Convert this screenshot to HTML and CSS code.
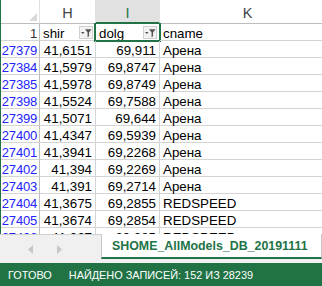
FILE: index.html
```html
<!DOCTYPE html>
<html lang="ru">
<head>
  <meta charset="UTF-8" />
  <title>SHOME_AllModels_DB_20191111</title>
  <link rel="stylesheet" href="styles.css">
</head>
<body>
  <div class="sheet">
    <div class="row head">
      <div class="c num corner"><span class="tri"></span></div>
      <div class="c h">H</div>
      <div class="c i sel">I</div>
      <div class="c k">K</div>
    </div>
    <div class="row">
      <div class="c num plain">1</div>
      <div class="c h txt">shir<span class="flt"><svg width="13" height="13" viewBox="0 0 13 13"><path d="M1 6h4l-2 2.2z" fill="#555"/><path d="M5.5 3h7l-2.7 3.4v4.2l-1.6 1v-5.2z" fill="#555"/></svg></span></div>
      <div class="c i txt active">dolg<span class="flt"><svg width="13" height="13" viewBox="0 0 13 13"><path d="M1 6h4l-2 2.2z" fill="#555"/><path d="M5.5 3h7l-2.7 3.4v4.2l-1.6 1v-5.2z" fill="#555"/></svg></span></div>
      <div class="c k txt">cname<span class="flt edge"></span></div>
    </div>
    <div class="row"><div class="c num">27379</div><div class="c h">41,6151</div><div class="c i">69,911</div><div class="c k txt">Арена</div></div>
    <div class="row"><div class="c num">27384</div><div class="c h">41,5979</div><div class="c i">69,8747</div><div class="c k txt">Арена</div></div>
    <div class="row"><div class="c num">27385</div><div class="c h">41,5978</div><div class="c i">69,8749</div><div class="c k txt">Арена</div></div>
    <div class="row"><div class="c num">27398</div><div class="c h">41,5524</div><div class="c i">69,7588</div><div class="c k txt">Арена</div></div>
    <div class="row"><div class="c num">27399</div><div class="c h">41,5071</div><div class="c i">69,644</div><div class="c k txt">Арена</div></div>
    <div class="row"><div class="c num">27400</div><div class="c h">41,4347</div><div class="c i">69,5939</div><div class="c k txt">Арена</div></div>
    <div class="row"><div class="c num">27401</div><div class="c h">41,3941</div><div class="c i">69,2268</div><div class="c k txt">Арена</div></div>
    <div class="row"><div class="c num">27402</div><div class="c h">41,394</div><div class="c i">69,2269</div><div class="c k txt">Арена</div></div>
    <div class="row"><div class="c num">27403</div><div class="c h">41,391</div><div class="c i">69,2714</div><div class="c k txt">Арена</div></div>
    <div class="row"><div class="c num">27404</div><div class="c h">41,3675</div><div class="c i">69,2855</div><div class="c k txt">REDSPEED</div></div>
    <div class="row"><div class="c num">27405</div><div class="c h">41,3674</div><div class="c i">69,2854</div><div class="c k txt">REDSPEED</div></div>
    <div class="row"><div class="c num">27406</div><div class="c h">41,367</div><div class="c i">69,285</div><div class="c k txt">REDSPEED</div></div>
  </div>
  <div class="tabs">
    <div class="nav">
      <svg width="6" height="9" viewBox="0 0 6 9"><path d="M5 0v9L0 4.5z" fill="#c6c6c6"/></svg>
      <svg width="6" height="9" viewBox="0 0 6 9"><path d="M1 0v9l5-4.5z" fill="#c6c6c6"/></svg>
    </div>
    <div class="tab">SHOME_AllModels_DB_20191111</div>
  </div>
  <div class="status">
    <span>ГОТОВО</span>
    <span>НАЙДЕНО ЗАПИСЕЙ: 152 ИЗ 28239</span>
  </div>
</body>
</html>
```

FILE: styles.css
```css
:root {
  --green: #217346;
  --grid: #d4d4d4;
  --head: #bdbdbd;
}
* { box-sizing: border-box; }
html, body {
  margin: 0; padding: 0;
  width: 322px; height: 286px;
  overflow: hidden;
  background: #fff;
  font-family: "Liberation Sans", Arial, sans-serif;
}
.sheet {
  height: 234px; overflow: hidden;
  border-left: 1px solid var(--green);
}
.row {
  display: flex; height: 17px;
  font-size: 13.33px; line-height: 13px;
}
.c {
  flex: none; position: relative;
  height: 17px; padding: 3px 3px 0;
  border-right: 1px solid var(--grid);
  border-bottom: 1px solid var(--grid);
  text-align: right; white-space: nowrap;
  color: #000;
}
.num {
  width: 39px; color: #2323ff;
  border-right-color: var(--head);
  padding: 3px 2px 0 0;
  font-size: 13px; letter-spacing: -0.2px;
}
.num.plain { color: #333; }
.h { width: 56px; }
.i { width: 64px; }
.k { width: 176px; }
.txt { text-align: left; }

/* column letters */
.head { height: 24px; }
.head .c {
  height: 24px; padding-top: 5px;
  text-align: center; font-size: 14.5px; line-height: 16px;
  color: #444; letter-spacing: 0;
  border-bottom-color: var(--head);
  border-right-color: #e1e1e1;
}
.head .sel {
  background: #e1e1e1; color: var(--green);
  border-bottom: 2px solid var(--green);
}
.corner .tri {
  position: absolute; left: 28px; top: 13px;
  width: 0; height: 0;
  border-left: 8px solid transparent;
  border-bottom: 8px solid #d9d9d9;
}

/* active cell I1 */
.active::after {
  content: ""; position: absolute;
  left: -2px; top: -1px; right: -2px; bottom: -2px;
  border: 2px solid var(--green); border-top: none;
}
.flt {
  position: absolute; right: 2px; top: 2px;
  width: 14px; height: 13px;
  background: #f2f2f2; border: 1px solid #d0d0d0;
  display: flex; align-items: center; justify-content: center;
}
.flt.edge { right: -8px; }

/* sheet tabs */
.tabs {
  display: flex; height: 29px;
  background: #f0f0f0;
  border-top: 1px solid #d0d0d0;
}
.nav {
  width: 101px; display: flex; gap: 22px;
  align-items: center; padding: 1px 0 0 28px;
}
.tab {
  flex: 1; background: #fff;
  margin-top: -1px; margin-bottom: 4px;
  border-left: 1px solid #c6c6c6; border-right: 1px solid #c6c6c6;
  border-bottom: 2px solid var(--green);
  padding: 5px 0 0 10px;
  font-size: 12.4px; font-weight: bold; color: var(--green);
  white-space: nowrap; overflow: hidden;
}
.status {
  height: 23px; background: var(--green); color: #fff;
  display: flex; gap: 17px; align-items: center;
  padding: 1px 0 0 8px;
  font-size: 10.9px;
}
```
